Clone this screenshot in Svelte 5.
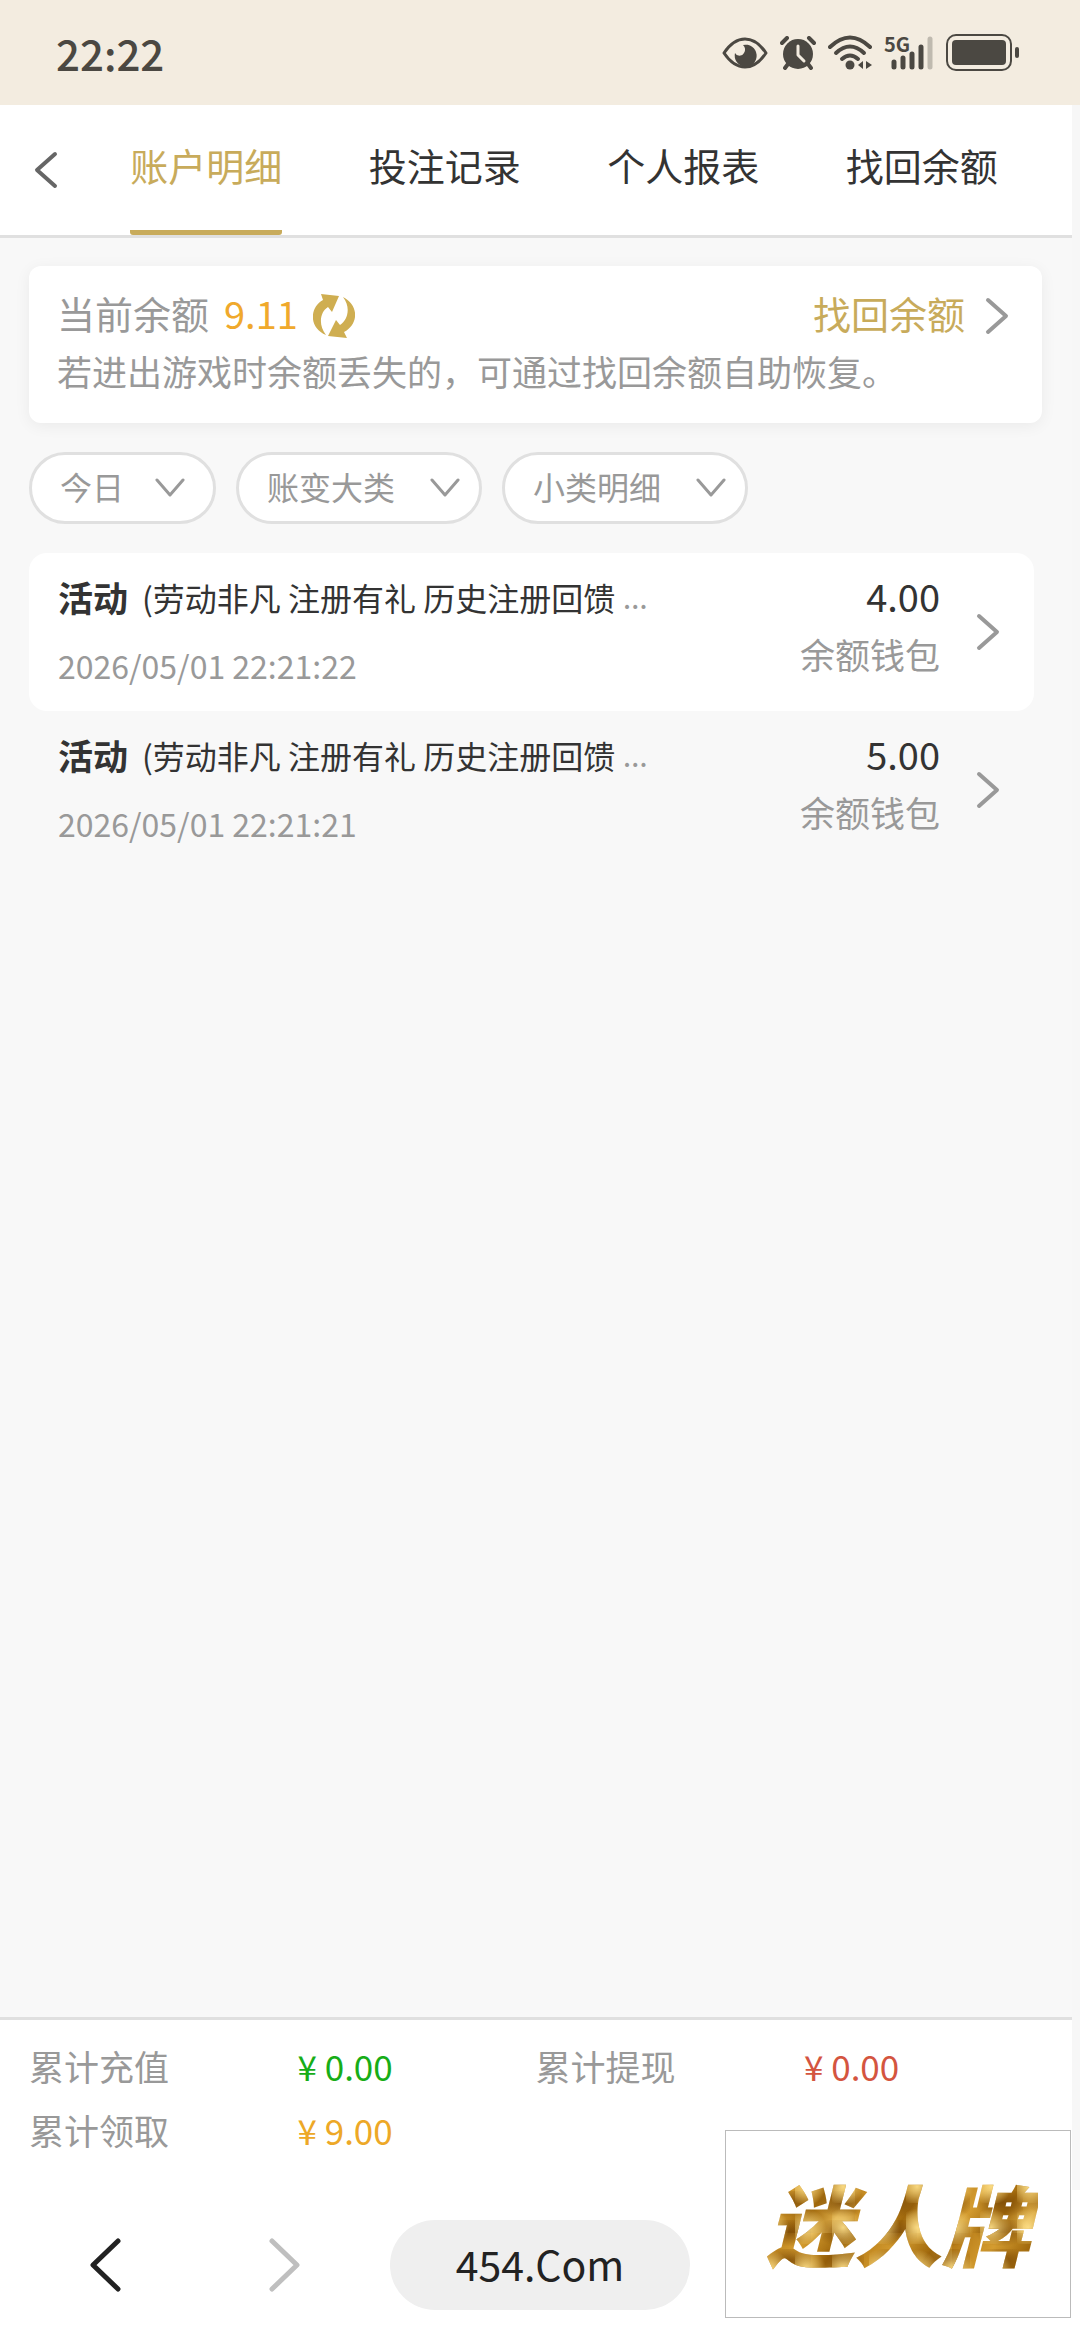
<script lang="ts">
  type Entry = { id: number; title: string; note: string; time: string; amount: string; wallet: string };

  const tabs = ["账户明细", "投注记录", "个人报表", "找回余额"];
  let activeTab = $state(0);

  const filters = [
    { id: "date", name: "日期", value: "今日" },
    { id: "category", name: "大类", value: "账变大类" },
    { id: "detail", name: "小类", value: "小类明细" },
  ];

  const entries: Entry[] = [
    {
      id: 1,
      title: "活动",
      note: "(劳动非凡 注册有礼 历史注册回馈",
      time: "2026/05/01 22:21:22",
      amount: "4.00",
      wallet: "余额钱包",
    },
    {
      id: 2,
      title: "活动",
      note: "(劳动非凡 注册有礼 历史注册回馈",
      time: "2026/05/01 22:21:21",
      amount: "5.00",
      wallet: "余额钱包",
    },
  ];

  const totals = [
    { label: "累计充值", value: "0.00", tone: "green" },
    { label: "累计提现", value: "0.00", tone: "red" },
    { label: "累计领取", value: "9.00", tone: "amber" },
  ];
</script>

{#snippet chevronRight()}
  <svg class="chevron" width="24" height="38" viewBox="0 0 24 38" aria-hidden="true">
    <path d="M3 3 L21 19 L3 35" />
  </svg>
{/snippet}

<div class="screen">
  <header class="status">
    <time>22:22</time>
    <div class="status-icons">
      <svg width="46" height="34" viewBox="0 0 46 34" aria-hidden="true">
        <path
          d="M2 17 C8 8 15 3 23 3 S38 8 44 17 C38 26 31 31 23 31 S8 26 2 17Z"
          fill="none"
          stroke="currentColor"
          stroke-width="3"
          stroke-linejoin="round"
        />
        <path d="M21 9 A11 11 0 1 1 13 17 A5 5 0 0 0 22 17 A6 6 0 0 0 21 9Z" fill="currentColor" />
      </svg>
      <svg width="36" height="34" viewBox="0 0 36 34" aria-hidden="true">
        <circle cx="18" cy="18" r="15" fill="currentColor" />
        <g fill="none" stroke="currentColor" stroke-width="4" stroke-linecap="round">
          <path d="M2 7 L7 2 M34 7 L29 2 M8 28 L5 32 M28 28 L31 32" />
        </g>
        <path
          d="M18 10 V19 L24 25"
          fill="none"
          stroke="#f3ece0"
          stroke-width="3"
          stroke-linecap="round"
          stroke-linejoin="round"
        />
      </svg>
      <svg width="44" height="36" viewBox="0 0 44 36" aria-hidden="true">
        <g fill="none" stroke="currentColor" stroke-width="4" stroke-linecap="round">
          <path d="M2 12 Q22 -7 42 12" />
          <path d="M8 18 Q22 5 36 18" />
          <path d="M14 24 Q22 17 30 24" />
        </g>
        <circle cx="22" cy="30" r="4.500" fill="currentColor" />
        <path d="M30 30 L35 26 V34Z M44 30 L38 26 V34Z" fill="currentColor" />
      </svg>
      <div class="signal">
        <span>5G</span>
        <svg width="50" height="34" viewBox="0 0 50 34" aria-hidden="true">
          <g stroke="currentColor" stroke-width="5" stroke-linecap="round">
            <path d="M10 26 V31 M19 22 V31 M28 18 V31 M37 11 V31" />
            <path d="M46 3 V31" opacity="0.3" />
          </g>
        </svg>
      </div>
      <svg width="74" height="37" viewBox="0 0 74 37" aria-hidden="true">
        <rect x="1" y="1" width="64" height="35" rx="9" fill="none" stroke="currentColor" stroke-width="2" />
        <rect x="6" y="6" width="54" height="25" rx="4" fill="currentColor" />
        <rect x="69" y="13" width="4" height="11" rx="2" fill="currentColor" />
      </svg>
    </div>
  </header>

  <div class="page">
    <nav class="tabs">
      <button class="back" aria-label="返回">
        <svg class="chevron" width="24" height="38" viewBox="0 0 24 38" aria-hidden="true">
          <path d="M21 3 L3 19 L21 35" />
        </svg>
      </button>
      {#each tabs as tab, i}
        <button class="tab" class:active={i === activeTab} onclick={() => (activeTab = i)}>
          <span>{tab}</span>
        </button>
      {/each}
    </nav>

    <main>
      <section class="balance">
        <div class="balance-row">
          <span>当前余额</span>
          <span class="balance-value">9.11</span>
          <button class="refresh" aria-label="刷新余额">
            <svg width="42" height="44" viewBox="0 0 42 44" aria-hidden="true">
              <path
                d="M8 0 L26 2 L19 18 L15 13 C7 18 5 31 13 41 C-4 34 -4 14 10 6Z"
                fill="currentColor"
              />
              <path
                d="M34 44 L15 42 L23 26 L27 31 C35 26 38 13 30 3 C46 11 46 30 31 38Z"
                fill="currentColor"
              />
            </svg>
          </button>
          <a class="recover" href="#recover">
            找回余额
            {@render chevronRight()}
          </a>
        </div>
        <p>若进出游戏时余额丢失的，可通过找回余额自助恢复。</p>
      </section>

      <div class="filters">
        {#each filters as filter}
          <label class="filter {filter.id}">
            <select id={filter.id} aria-label={filter.name}>
              <option>{filter.value}</option>
            </select>
            <svg width="30" height="20" viewBox="0 0 30 20" aria-hidden="true">
              <path d="M2 2 L15 17 L28 2" />
            </svg>
          </label>
        {/each}
      </div>

      <ul class="entries">
        {#each entries as entry (entry.id)}
          <li>
            <a class="entry" href="#entry-{entry.id}">
              <div class="entry-info">
                <div class="entry-title">
                  <strong>{entry.title}</strong>
                  <span class="note">{entry.note}</span>
                  <span class="more">…</span>
                </div>
                <time>{entry.time}</time>
              </div>
              <div class="entry-amount">
                <span class="amount">{entry.amount}</span>
                <span class="wallet">{entry.wallet}</span>
              </div>
              {@render chevronRight()}
            </a>
          </li>
        {/each}
      </ul>
    </main>

    <dl class="totals">
      {#each totals as total}
        <dt>{total.label}</dt>
        <dd class={total.tone}>¥ {total.value}</dd>
      {/each}
    </dl>
  </div>

  <footer class="toolbar">
    <button class="go" aria-label="后退">
      <svg width="32" height="54" viewBox="0 0 32 54" aria-hidden="true">
        <path d="M29 3 L4 27 L29 51" />
      </svg>
    </button>
    <button class="go disabled" aria-label="前进">
      <svg width="32" height="54" viewBox="0 0 32 54" aria-hidden="true">
        <path d="M3 3 L28 27 L3 51" />
      </svg>
    </button>
    <button class="address">454.Com</button>
  </footer>

  <a class="promo" href="#promo"><span>迷人牌</span></a>
</div>

<style>
  :global(body) {
    background: #f8f8f8;
  }

  .screen {
    position: relative;
    display: flex;
    flex-direction: column;
    min-height: 100vh;
    color: #333;
    font-family: "Noto Sans CJK SC", sans-serif;
    font-size: 35px;
    line-height: 50px;
  }

  button,
  select {
    margin: 0;
    padding: 0;
    border: 0;
    background: none;
    color: inherit;
    font: inherit;
  }

  a {
    color: inherit;
    text-decoration: none;
  }

  svg {
    display: block;
    flex: none;
  }

  .status {
    display: flex;
    align-items: center;
    justify-content: space-between;
    height: 105px;
    padding: 0 60px 0 56px;
    background: #f3ece0;
    color: #4b4842;
  }

  .status time {
    font-size: 42px;
    font-weight: 500;
  }

  .status-icons {
    display: flex;
    align-items: center;
    gap: 12px;
  }

  .signal {
    position: relative;
  }

  .signal span {
    position: absolute;
    top: -2px;
    left: 0;
    font-size: 20px;
    font-weight: 700;
    line-height: 20px;
  }

  .page {
    flex: 1;
    display: flex;
    flex-direction: column;
    border-right: 8px solid #f7f7f7;
  }

  .tabs {
    display: flex;
    height: 130px;
    padding-right: 31px;
    border-bottom: 3px solid #e0e0e0;
    background: #fff;
  }

  .back {
    width: 87px;
    padding-left: 34px;
    color: #666;
  }

  .chevron path,
  .filter path {
    fill: none;
    stroke: currentColor;
    stroke-width: 4;
    stroke-linecap: round;
    stroke-linejoin: round;
  }

  .filter path {
    stroke-width: 3;
  }

  .tab {
    flex: 1;
    display: flex;
    justify-content: center;
    font-size: 38px;
  }

  .tab span {
    box-sizing: border-box;
    height: 130px;
    border-bottom: 5px solid transparent;
    border-radius: 3px;
    line-height: 120px;
  }

  .tab.active span {
    border-color: #c8ab5b;
    color: #c8ab5b;
  }

  main {
    flex: 1;
    padding: 28px 30px 0 29px;
  }

  .balance {
    padding: 22px 33px 27px 28px;
    border-radius: 12px;
    background: #fff;
    box-shadow: 0 3px 16px rgba(0, 0, 0, 0.06);
    color: #999;
  }

  .balance-row {
    display: flex;
    align-items: center;
    font-size: 38px;
  }

  .balance-value {
    margin: 0 15px;
    color: #f0a92c;
  }

  .refresh {
    padding-top: 6px;
    color: #cfae51;
  }

  .recover {
    display: flex;
    align-items: center;
    gap: 20px;
    margin-left: auto;
    color: #c8ab5b;
  }

  .recover .chevron {
    padding-top: 6px;
    color: #999;
  }

  .balance p {
    margin: 8px 0 0;
  }

  .filters {
    display: flex;
    gap: 20px;
    margin-top: 29px;
  }

  .filter {
    box-sizing: border-box;
    display: flex;
    align-items: center;
    gap: 34px;
    height: 72px;
    padding: 0 19px 0 28px;
    border: 3px solid #e0e0e0;
    border-radius: 36px;
    background: #fff;
    color: #999;
    font-size: 32px;
  }

  .filter.date {
    gap: 30px;
    padding-right: 28px;
  }

  .filter select {
    padding-bottom: 4px;
    appearance: none;
  }

  .entries {
    margin: 29px 8px 0 0;
    padding: 0;
    list-style: none;
  }

  .entry {
    box-sizing: border-box;
    display: flex;
    align-items: center;
    height: 158px;
    padding: 0 34px 0 29px;
    border-radius: 18px;
  }

  li:first-child .entry {
    background: #fff;
  }

  .entry-info {
    flex: 1;
    display: flex;
    flex-direction: column;
    gap: 18px;
    padding-bottom: 2px;
  }

  .entry-title {
    display: flex;
  }

  .entry-title strong {
    margin-right: 14px;
  }

  .note,
  .more,
  .entry time {
    font-size: 32px;
  }

  .more {
    margin-left: 8px;
    color: #999;
    font-family: Lato, sans-serif;
  }

  .entry time,
  .wallet {
    color: #999;
  }

  .entry-amount {
    display: flex;
    flex-direction: column;
    gap: 8px;
    margin-right: 36px;
    padding-bottom: 14px;
    text-align: right;
  }

  .amount {
    font-size: 38px;
  }

  .entry .chevron {
    color: #999;
  }

  .totals {
    display: grid;
    grid-template-columns: 53fr 47fr 53fr 47fr;
    margin: 0;
    padding: 14px 30px 28px 29px;
    border-top: 3px solid #e0e0e0;
    background: #fff;
    line-height: 64px;
  }

  .totals dt {
    color: #999;
  }

  .totals dd {
    margin: 0;
  }

  .green {
    color: #17ad17;
  }

  .red {
    color: #d4553f;
  }

  .amber {
    color: #eda827;
  }

  .toolbar {
    display: flex;
    align-items: center;
    height: 150px;
    padding-left: 15px;
    background: #fff;
  }

  .go {
    display: flex;
    justify-content: center;
    width: 180px;
    color: #222;
  }

  .go path {
    fill: none;
    stroke: currentColor;
    stroke-width: 5;
    stroke-linecap: round;
    stroke-linejoin: round;
  }

  .go.disabled {
    color: #bfbfbf;
  }

  .address {
    width: 300px;
    height: 90px;
    margin-left: 15px;
    padding-bottom: 4px;
    border-radius: 45px;
    background: #efefef;
    color: #222;
    font-size: 41px;
  }

  .promo {
    position: absolute;
    right: 9px;
    bottom: 22px;
    box-sizing: border-box;
    display: flex;
    align-items: center;
    justify-content: center;
    width: 346px;
    height: 188px;
    border: 1px solid #bbb;
    background: #fff;
  }

  /* gold foil lettering */
  .promo span {
    padding: 0 8px 4px;
    background:
      radial-gradient(ellipse at 30% 60%, rgba(255, 226, 140, 0.9), transparent 55%) 0 0 / 37px 41px,
      radial-gradient(ellipse at 60% 40%, rgba(120, 70, 4, 0.8), transparent 60%) 0 0 / 53px 29px,
      linear-gradient(125deg, #b07412, #d49c30 35%, #a0680c 60%, #dcab46 80%, #b07412) 0 0 / 97px 71px;
    background-clip: text;
    color: transparent;
    font-size: 88px;
    font-style: italic;
    font-weight: 900;
    line-height: 120px;
  }
</style>
